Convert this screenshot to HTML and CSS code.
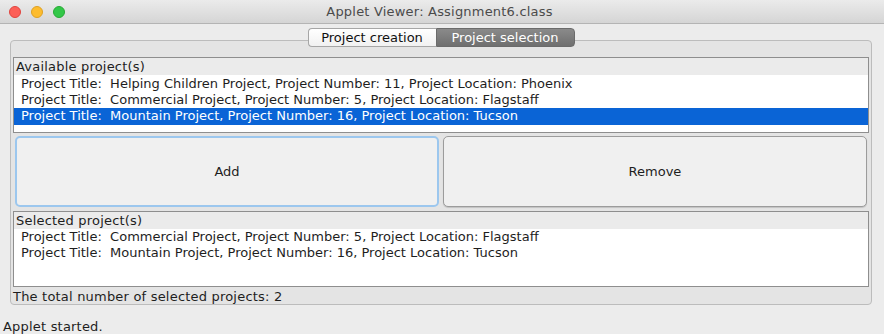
FILE: index.html
```html
<!DOCTYPE html>
<html>
<head>
<meta charset="utf-8">
<link rel="stylesheet" href="styles.css">
</head>
<body>
<div class="window">
  <div class="titlebar">
    <div class="lights">
      <span class="light red"></span>
      <span class="light yellow"></span>
      <span class="light green"></span>
    </div>
    <div class="title">Applet Viewer: Assignment6.class</div>
  </div>
  <div class="applet">
    <div class="tabs">
      <div class="tab">Project creation</div>
      <div class="tab active">Project selection</div>
    </div>
    <div class="pane">
      <div class="list list-available">
        <div class="list-header">Available project(s)</div>
        <div class="row">Project Title:&nbsp; Helping Children Project, Project Number: 11, Project Location: Phoenix</div>
        <div class="row">Project Title:&nbsp; Commercial Project, Project Number: 5, Project Location: Flagstaff</div>
        <div class="row selected">Project Title:&nbsp; Mountain Project, Project Number: 16, Project Location: Tucson</div>
      </div>
      <div class="buttons">
        <div class="btn focused">Add</div>
        <div class="btn">Remove</div>
      </div>
      <div class="list list-selected">
        <div class="list-header">Selected project(s)</div>
        <div class="row">Project Title:&nbsp; Commercial Project, Project Number: 5, Project Location: Flagstaff</div>
        <div class="row">Project Title:&nbsp; Mountain Project, Project Number: 16, Project Location: Tucson</div>
      </div>
      <div class="total">The total number of selected projects: 2</div>
    </div>
  </div>
  <div class="status">Applet started.</div>
</div>
</body>
</html>
```
FILE: styles.css
```css
html, body {
  margin: 0;
  padding: 0;
}
body {
  width: 884px;
  height: 334px;
  overflow: hidden;
  background: #ececec;
  font-family: "DejaVu Sans", "Liberation Sans", sans-serif;
  font-size: 13px;
  color: #1e1e1e;
}
.window {
  display: flex;
  flex-direction: column;
  height: 334px;
}
.titlebar {
  height: 23px;
  background: linear-gradient(#ebebeb, #d5d5d5);
  border-bottom: 1px solid #b4b4b4;
  display: flex;
  align-items: center;
}
.lights {
  display: flex;
  gap: 10px;
  padding-left: 9px;
}
.light {
  width: 12px;
  height: 12px;
  border-radius: 50%;
  box-sizing: border-box;
}
.red { background: #fc5f57; border: 1px solid #e0443e; }
.yellow { background: #fdbc2e; border: 1px solid #dea123; }
.green { background: #33c748; border: 1px solid #27aa35; }
.title {
  flex: 1;
  text-align: center;
  margin-right: 70px;
  color: #4b4b4b;
  font-size: 13px;
  letter-spacing: 0.2px;
}
.applet {
  display: flex;
  flex-direction: column;
  padding: 4px 12px 0 10px;
}
.tabs {
  display: flex;
  justify-content: center;
  height: 19px;
  margin-bottom: -7px;
  position: relative;
  z-index: 1;
}
.tab {
  height: 19px;
  box-sizing: border-box;
  padding: 0 9px;
  line-height: 17px;
  background: linear-gradient(#ffffff, #f1f1f1);
  border: 1px solid #a6a6a6;
  color: #111111;
  text-align: center;
}
.tab:first-child {
  border-radius: 4px 0 0 4px;
  border-right: none;
  width: 128px;
}
.tab.active {
  background: linear-gradient(#8a8a8a, #6f6f6f);
  border-color: #6b6b6b;
  color: #ffffff;
  border-radius: 0 4px 4px 0;
  width: 139px;
}
.pane {
  height: 265px;
  box-sizing: border-box;
  border: 1px solid #bcbcbc;
  border-radius: 4px;
  background: #e4e4e4;
  padding: 16px 2px 0 2px;
  display: flex;
  flex-direction: column;
}
.list {
  background: #ffffff;
  border: 1px solid #8e8e8e;
  box-sizing: border-box;
}
.list-available { height: 77px; }
.list-selected { height: 77px; }
.list-header {
  background: #ebebeb;
  height: 17px;
  line-height: 17px;
  padding-left: 2px;
  letter-spacing: 0.2px;
}
.row {
  height: 16px;
  line-height: 16px;
  padding-left: 7px;
  white-space: nowrap;
}
.list-available .list-header + .row { margin-top: 1px; }
.row.selected {
  background: #0a64d6;
  color: #ffffff;
  height: 17px;
}
.buttons {
  display: grid;
  grid-template-columns: 1fr 1fr;
  gap: 4px;
  padding: 3px 2px 4px 2px;
}
.btn {
  height: 71px;
  box-sizing: border-box;
  border: 1px solid #9c9c9c;
  border-radius: 5px;
  background: #f0f0f0;
  display: flex;
  align-items: center;
  justify-content: center;
  box-shadow: 0 1px 1px rgba(0,0,0,0.15);
}
.btn.focused {
  border: 2px solid #9cc7ee;
  box-shadow: none;
}
.total {
  height: 17px;
  line-height: 20px;
  letter-spacing: 0.2px;
}
.status {
  margin-top: 14px;
  padding-left: 3px;
  letter-spacing: 0.2px;
}
```
